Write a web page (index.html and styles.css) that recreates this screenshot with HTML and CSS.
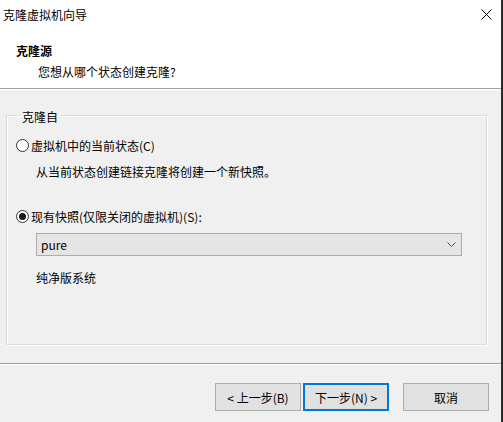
FILE: index.html
```html
<!DOCTYPE html>
<html lang="zh-CN">
<head>
<meta charset="utf-8">
<title>克隆虚拟机向导</title>
<link rel="stylesheet" href="styles.css">
</head>
<body>
<div class="window">
  <header class="header">
    <div class="titlebar">
      <span class="title">克隆虚拟机向导</span>
      <span class="close" aria-label="关闭">
        <svg width="11" height="11" viewBox="0 0 11 11"><path d="M0.5 0.5 L10.5 10.5 M10.5 0.5 L0.5 10.5" stroke="#000" stroke-width="1" fill="none"/></svg>
      </span>
    </div>
    <div class="h-title">克隆源</div>
    <div class="h-sub">您想从哪个状态创建克隆?</div>
  </header>
  <main class="main">
    <fieldset class="group">
      <legend class="legend">克隆自</legend>
      <label class="radio-row first">
        <span class="radio"></span>
        <span>虚拟机中的当前状态(C)</span>
      </label>
      <div class="desc">从当前状态创建链接克隆将创建一个新快照。</div>
      <label class="radio-row second">
        <span class="radio checked"></span>
        <span>现有快照(仅限关闭的虚拟机)(S):</span>
      </label>
      <div class="combo">
        <span class="combo-text">pure</span>
        <svg class="chev" width="9" height="5" viewBox="0 0 9 5"><path d="M0.5 0.5 L4.5 4.5 L8.5 0.5" stroke="#4a4a4a" stroke-width="1" fill="none"/></svg>
      </div>
      <div class="desc snap">纯净版系统</div>
    </fieldset>
  </main>
  <div class="separator"></div>
  <footer class="footer">
    <button class="btn">&lt; 上一步(B)</button>
    <button class="btn primary">下一步(N) &gt;</button>
    <button class="btn cancel">取消</button>
  </footer>
</div>
</body>
</html>
```
FILE: styles.css
```css
* { box-sizing: border-box; }
html, body {
  margin: 0;
  padding: 0;
  background: #f0f0f0;
}
body {
  font-family: "Noto Sans CJK SC", "Noto Sans", sans-serif;
  font-size: 12px;
  color: #000;
}
.window {
  width: 503px;
  height: 422px;
  display: flex;
  flex-direction: column;
  border-right: 2px solid #2b2b2b;
  background: #f0f0f0;
  overflow: hidden;
}
.header {
  height: 89px;
  flex: none;
  background: #fff;
  border-bottom: 1px solid #a0a0a0;
  box-shadow: 0 1px 0 #ffffff;
}
.titlebar {
  height: 30px;
  display: flex;
  align-items: center;
  justify-content: space-between;
  padding-left: 3px;
  padding-right: 9px;
}
.title {
  line-height: 30px;
}
.close {
  display: flex;
  width: 11px;
  height: 11px;
  margin-top: -1px;
}
.h-title {
  font-weight: bold;
  padding-left: 16px;
  margin-top: 12px;
  line-height: 17px;
}
.h-sub {
  padding-left: 38px;
  margin-top: 4px;
  line-height: 17px;
}
.main {
  flex: 1;
  padding: 18px 0 0 6px;
}
.group {
  width: 481px;
  height: 238px;
  margin: 0;
  padding: 0 0 0 9px;
  border: 1px solid #dcdcdc;
  box-shadow: inset 1px 1px 0 #fff, 1px 1px 0 #fff;
}
.legend {
  padding: 3px 2px 0 2px;
  margin-left: 4px;
  line-height: 14px;
}
.radio-row {
  display: flex;
  align-items: center;
  gap: 2px;
  line-height: 17px;
}
.radio-row.first { margin-top: 13px; }
.radio-row.second { margin-top: 28px; }
.radio {
  width: 13px;
  height: 13px;
  border: 1px solid #333;
  border-radius: 50%;
  background: #fff;
  display: inline-flex;
  align-items: center;
  justify-content: center;
  flex: none;
}
.radio.checked::after {
  content: "";
  width: 7px;
  height: 7px;
  border-radius: 50%;
  background: #1a1a1a;
}
.desc {
  padding-left: 20px;
  margin-top: 9px;
  line-height: 17px;
}
.combo {
  margin: 8px 0 0 20px;
  width: 426px;
  height: 23px;
  background: #e5e5e5;
  border: 1px solid #adadad;
  display: flex;
  align-items: center;
  justify-content: space-between;
  padding: 0 5px 0 4px;
}
.combo-text { line-height: 17px; }
.chev { display: block; }
.desc.snap { margin-top: 13px; }
.separator {
  flex: none;
  height: 2px;
  border-top: 1px solid #a0a0a0;
  border-bottom: 1px solid #ffffff;
}
.footer {
  flex: none;
  height: 57px;
  display: flex;
  justify-content: flex-end;
  align-items: flex-start;
  padding: 18px 12px 0 0;
}
.btn {
  font-family: inherit;
  font-size: 12px;
  color: #000;
  width: 86px;
  height: 28px;
  background: #e1e1e1;
  border: 1px solid #adadad;
  padding: 0;
  margin: 0;
  line-height: 17px;
}
.btn.primary {
  border: 2px solid #0078d7;
  margin-left: 2px;
}
.btn.cancel {
  margin-left: 14px;
}
```
